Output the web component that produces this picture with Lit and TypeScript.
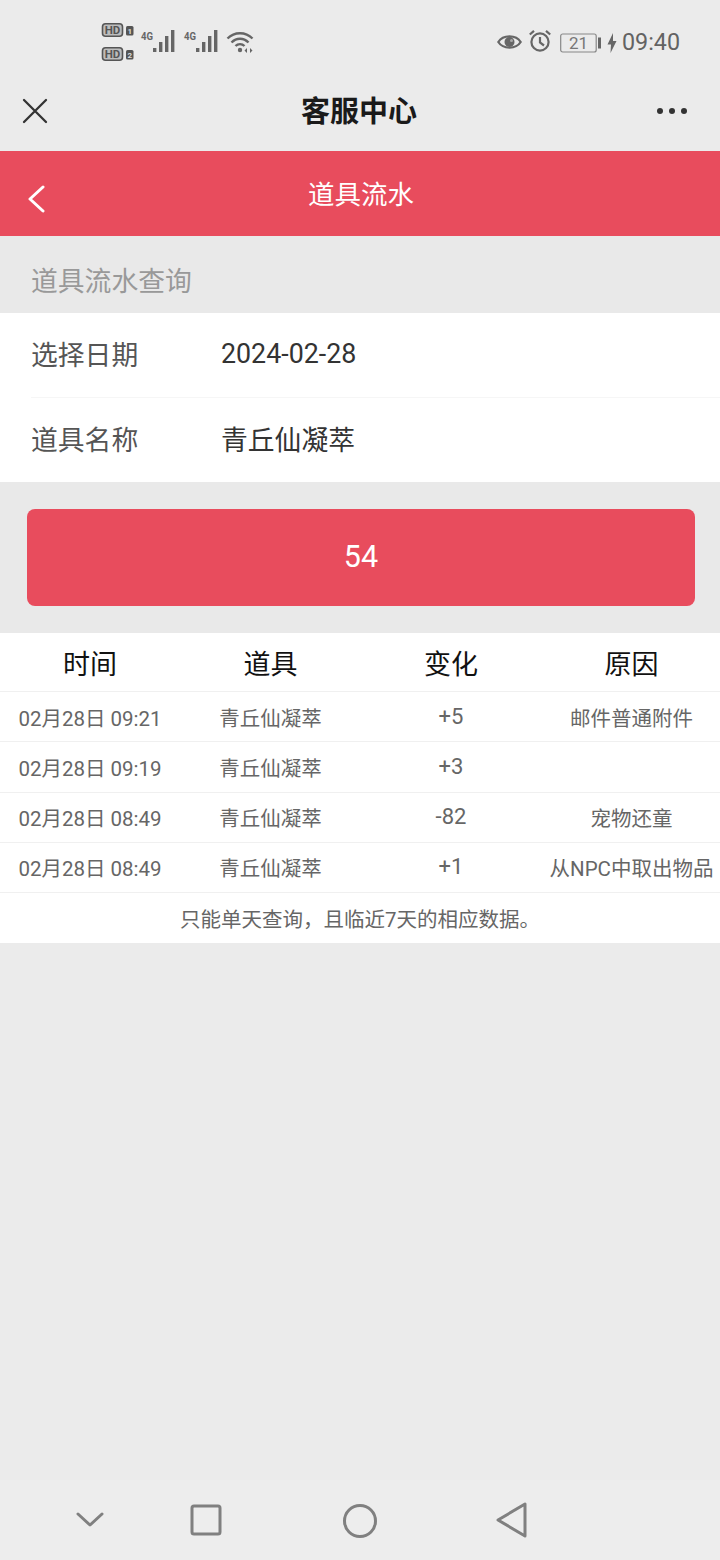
import { LitElement, html, css } from 'lit';
import { customElement } from 'lit/decorators.js';

const rows = [
  { time: '02月28日 09:21', item: '青丘仙凝萃', delta: '+5', reason: '邮件普通附件' },
  { time: '02月28日 09:19', item: '青丘仙凝萃', delta: '+3', reason: '' },
  { time: '02月28日 08:49', item: '青丘仙凝萃', delta: '-82', reason: '宠物还童' },
  { time: '02月28日 08:49', item: '青丘仙凝萃', delta: '+1', reason: '从NPC中取出物品' },
];

@customElement('app-root')
export class AppRoot extends LitElement {
  static styles = css`
    :host {
      display: flex;
      flex-direction: column;
      width: 720px;
      height: 1560px;
      background: #ebebeb;
      font-family: Roboto, 'Noto Sans CJK SC', sans-serif;
      color: #333;
      overflow: hidden;
    }
    .status {
      height: 75px;
      display: flex;
      justify-content: space-between;
      align-items: center;
      padding: 9px 40px 0 101px;
      box-sizing: border-box;
      color: #5f5f5f;
    }
    .status-left, .status-right { display: flex; align-items: center; }
    .sims { display: flex; flex-direction: column; gap: 10px; width: 39px; }
    .status svg { display: block; }
    .eye { margin-top: -1px; }
    .alarm { margin-left: 6px; margin-top: -2px; }
    .battery { margin-left: 8px; margin-top: 1px; }
    .bolt { margin-left: 6px; margin-top: 1px; }
    .clock { font-size: 23.3px; margin-left: 5px; color: #636363; }
    .wx-bar {
      height: 76px;
      box-sizing: border-box;
      padding: 0 32px 5px 21px;
      display: flex;
      align-items: center;
      justify-content: space-between;
    }
    .wx-title {
      font-size: 29px;
      font-weight: 700;
      color: #1a1a1a;
      margin: -4px 0 0 13px;
    }
    .page-head {
      height: 85px;
      background: #e84c5d;
      display: flex;
      align-items: center;
      justify-content: center;
      position: relative;
      color: #fff;
      font-size: 26.5px;
    }
    .page-head span { margin: -2px 0 0 2px; }
    .back { position: absolute; left: 27px; top: 34px; }
    .section {
      height: 77px;
      padding: 9px 31px 0;
      display: flex;
      align-items: center;
      font-size: 26.8px;
      color: #999;
      box-sizing: border-box;
      background: #e9e9e9;
    }
    .form { background: #fff; padding-left: 31px; }
    .field {
      height: 84px;
      display: flex;
      align-items: center;
      font-size: 26.8px;
      color: #555;
    }
    .field + .field { border-top: 1px solid #f6f6f6; }
    .field label { width: 190px; margin-bottom: 4px; }
    .field span { color: #333; margin-bottom: 4px; }
    .field span.date { margin-bottom: 2px; }
    .submit-wrap { background: #e9e9e9; padding: 27px 25px 27px 27px; }
    .submit {
      height: 97px;
      border-radius: 8px;
      background: #e84c5d;
      color: #fff;
      font-size: 30.5px;
      display: flex;
      align-items: center;
      justify-content: center;
      padding-bottom: 3px;
      box-sizing: border-box;
    }
    .table { background: #fff; }
    .row {
      display: grid;
      grid-template-columns: 180px 181px 180px 179px;
      height: 50.25px;
      align-items: center;
      text-align: center;
      border-bottom: 1px solid #f0f0f0;
      box-sizing: border-box;
      font-size: 20.5px;
      color: #666;
    }
    .row.head { height: 59px; font-size: 27px; color: #111; }
    .row .num { font-size: 22px; margin-top: -1px; }
    .reason { white-space: nowrap; padding-left: 2px; }
    .note {
      height: 50px;
      display: flex;
      align-items: center;
      justify-content: center;
      font-size: 20.5px;
      color: #666;
    }
    .nav {
      margin-top: auto;
      height: 80px;
      position: relative;
      background: #ededed;
    }
    .nav svg { position: absolute; }
  `;

  render() {
    return html`
      <div class="status">
        <div class="status-left">
          <div class="sims">
            ${['1', '2'].map(n => html`
              <svg width="33" height="14" viewBox="0 0 33 14">
                <rect x="1.5" y="0.8" width="20" height="12.4" rx="3" fill="#bdbdbd" stroke="#555" stroke-width="1.6"/>
                <text x="11.5" y="11.3" font-size="11.5" font-weight="700" text-anchor="middle" fill="#555" font-family="Roboto">HD</text>
                <rect x="25" y="3" width="7.5" height="9.5" rx="1.5" fill="#555"/>
                <text x="28.8" y="11" font-size="8" font-weight="700" text-anchor="middle" fill="#ddd" font-family="Roboto">${n}</text>
              </svg>`)}
          </div>
          ${[0, 1].map(() => html`
            <svg width="43" height="26" viewBox="0 0 43 26">
              <text x="1" y="11" font-size="11.5" font-weight="700" fill="#666" font-family="Roboto" textLength="12" lengthAdjust="spacingAndGlyphs">4G</text>
              <g fill="#666">
                <rect x="13" y="19" width="3.4" height="4"/>
                <rect x="19" y="13" width="3.4" height="10"/>
                <rect x="25" y="7" width="3.4" height="16"/>
                <rect x="31" y="1" width="3.4" height="22"/>
              </g>
            </svg>`)}
          <svg width="28" height="24" viewBox="0 0 28 24" fill="none" stroke="#666" stroke-width="2.4">
            <path d="M1.5 8.5C8.5 1.5 19.5 1.5 26.5 8.5"/>
            <path d="M5.5 12.5C10.5 7.5 17.5 7.5 22.5 12.5"/>
            <path d="M9.5 16C12 13.5 16 13.5 18.5 16"/>
            <circle cx="14" cy="20" r="2.2" fill="#666" stroke="none"/>
            <path d="M21 18l-2.5 2.5L21 23zM24 18l2.5 2.5L24 23z" fill="#666" stroke="none"/>
          </svg>
        </div>
        <div class="status-right">
          <svg class="eye" width="25" height="18" viewBox="0 0 25 18" fill="none" stroke="#666" stroke-width="2.2">
            <path d="M1.3 9C6 1.5 19 1.5 23.7 9C19 16.5 6 16.5 1.3 9Z"/>
            <circle cx="12.5" cy="9" r="5" fill="#666" stroke="none"/>
            <circle cx="14.5" cy="7.5" r="1.5" fill="#aaa" stroke="none"/>
          </svg>
          <svg class="alarm" width="24" height="24" viewBox="0 0 24 24" fill="none" stroke="#666" stroke-width="2.2">
            <circle cx="12" cy="13" r="8.6"/>
            <path d="M12 8v5.5l4 3M1.8 5.5L6 1.8M22.2 5.5L18 1.8"/>
          </svg>
          <svg class="battery" width="41" height="20" viewBox="0 0 41 20">
            <rect x="0.7" y="1" width="35.5" height="18" rx="2" fill="none" stroke="#888" stroke-width="1.2"/>
            <text x="18.5" y="16" font-size="17" text-anchor="middle" fill="#777" font-family="Roboto">21</text>
            <rect x="38" y="4.5" width="3" height="11" fill="#666"/>
          </svg>
          <svg class="bolt" width="10" height="20" viewBox="0 0 10 20">
            <path d="M6 0L0.5 11.5H4L3.5 20L9.5 8H6Z" fill="#666"/>
          </svg>
          <span class="clock">09:40</span>
        </div>
      </div>

      <div class="wx-bar">
        <svg width="28" height="28" viewBox="0 0 28 28" fill="none" stroke="#333" stroke-width="2.3" stroke-linecap="round">
          <path d="M3 3L25 25M25 3L3 25"/>
        </svg>
        <div class="wx-title">客服中心</div>
        <svg width="32" height="8" viewBox="0 0 32 8" fill="#333">
          <circle cx="4" cy="4" r="3"/><circle cx="16" cy="4" r="3"/><circle cx="28" cy="4" r="3"/>
        </svg>
      </div>

      <div class="page-head">
        <svg class="back" width="18" height="28" viewBox="0 0 18 28" fill="none" stroke="#fff" stroke-width="3" stroke-linecap="round" stroke-linejoin="round">
          <path d="M16 2L3 14L16 26"/>
        </svg>
        <span>道具流水</span>
      </div>

      <div class="section">道具流水查询</div>

      <div class="form">
        <div class="field"><label>选择日期</label><span class="date">2024-02-28</span></div>
        <div class="field"><label>道具名称</label><span>青丘仙凝萃</span></div>
      </div>

      <div class="submit-wrap"><div class="submit">54</div></div>

      <div class="table">
        <div class="row head"><div>时间</div><div>道具</div><div>变化</div><div class="reason">原因</div></div>
        ${rows.map(r => html`
          <div class="row">
            <div>${r.time}</div>
            <div>${r.item}</div>
            <div class="num">${r.delta}</div>
            <div class="reason">${r.reason}</div>
          </div>`)}
        <div class="note">只能单天查询，且临近7天的相应数据。</div>
      </div>

      <div class="nav">
        <svg style="left:76px;top:32px" width="28" height="16" viewBox="0 0 28 16" fill="none" stroke="#808080" stroke-width="3" stroke-linecap="round" stroke-linejoin="round">
          <path d="M2 2L14 13L26 2"/>
        </svg>
        <svg style="left:190px;top:24px" width="32" height="32" viewBox="0 0 32 32" fill="none" stroke="#808080" stroke-width="3" stroke-linejoin="round">
          <rect x="2" y="2" width="28" height="28" rx="2"/>
        </svg>
        <svg style="left:342px;top:23px" width="36" height="36" viewBox="0 0 36 36" fill="none" stroke="#808080" stroke-width="3">
          <circle cx="18" cy="18" r="15.5"/>
        </svg>
        <svg style="left:496px;top:22px" width="32" height="36" viewBox="0 0 32 36" fill="none" stroke="#808080" stroke-width="3" stroke-linejoin="round">
          <path d="M29 2V34L2 18Z"/>
        </svg>
      </div>
    `;
  }
}
